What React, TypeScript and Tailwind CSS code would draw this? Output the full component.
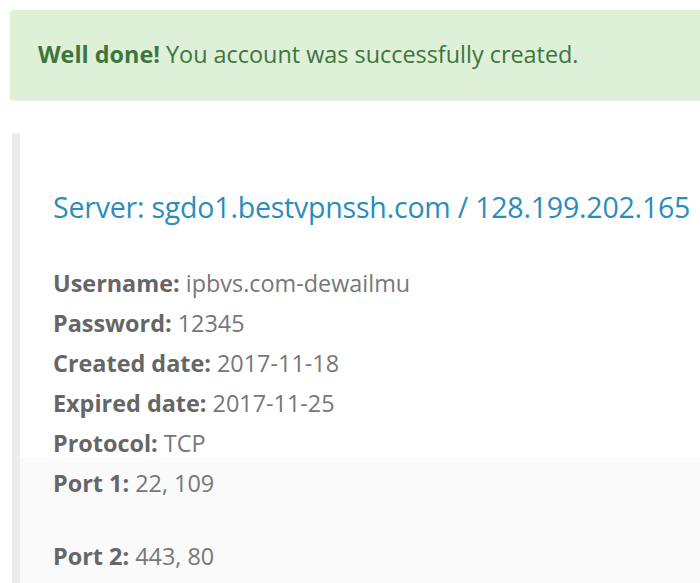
import React from "react";

const rows: [string, string][] = [
  ["Username:", "ipbvs.com-dewailmu"],
  ["Password:", "12345"],
  ["Created date:", "2017-11-18"],
  ["Expired date:", "2017-11-25"],
  ["Protocol:", "TCP"],
];

export default function App() {
  return (
    <div className="w-[700px] h-[583px] overflow-hidden bg-white" style={{ fontFamily: '"Open Sans", sans-serif' }}>
      <div className="pt-[10px] pl-[10px]">
        <div className="h-[90px] w-[720px] rounded-[4px] bg-[#dff0d8] shadow-[0_1px_2px_rgba(0,0,0,0.08)] flex items-center pl-[28px] text-[#3c763d] text-[23.4px]">
          <span>
            <b className="font-bold">Well done!</b> You account was successfully created.
          </span>
        </div>
      </div>
      <div className="mt-[33px] ml-[12px] border-l-[8px] border-[#ececec] h-[460px]">
        <div className="bg-white pl-[33px] pt-[54px]">
          <h3 className="text-[#2a8dbc] text-[28.5px] leading-[40px] tracking-[-0.2px] whitespace-nowrap">
            Server: sgdo1.bestvpnssh.com / 128.199.202.165
          </h3>
          <div className="mt-[36px] text-[23.4px] leading-[40px] text-[#777]">
            {rows.map(([k, v], i) => (
              <div key={k} className={i === 4 ? "h-[35px]" : ""}>
                <b className="font-bold text-[#666]">{k}</b> {v}
              </div>
            ))}
          </div>
        </div>
        <div className="bg-[#fafafa] pl-[33px] pt-[5px] pb-[40px] text-[23.4px] leading-[40px] text-[#777]">
          <div>
            <b className="font-bold text-[#666]">Port 1:</b> 22, 109
          </div>
          <div className="mt-[33px]">
            <b className="font-bold text-[#666]">Port 2:</b> 443, 80
          </div>
        </div>
      </div>
    </div>
  );
}
